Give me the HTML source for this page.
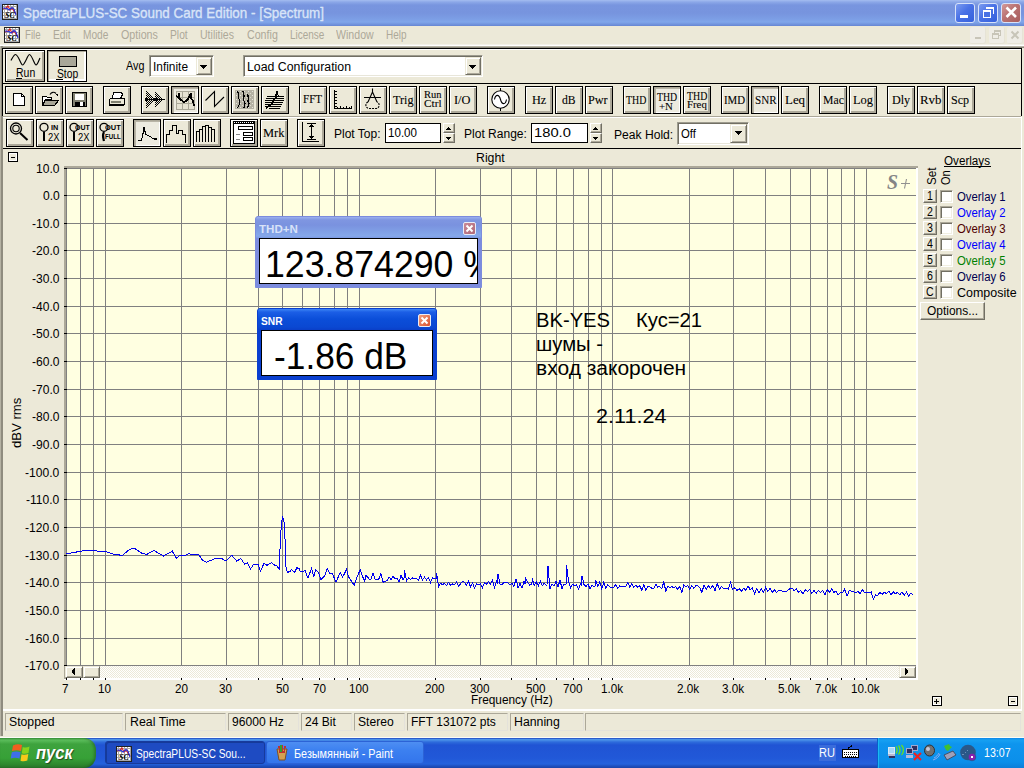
<!DOCTYPE html><html><head><meta charset="utf-8"><style>
*{margin:0;padding:0;box-sizing:border-box}
html,body{width:1024px;height:768px;overflow:hidden;background:#ECE9D8;font-family:"Liberation Sans",sans-serif;font-size:11px;color:#000;position:relative}
.ab{position:absolute}
.t{position:absolute;white-space:nowrap;line-height:1}
svg{shape-rendering:crispEdges}
svg .aa{shape-rendering:geometricPrecision}
</style></head><body>

<div class="ab" style="left:0px;top:0px;width:1024px;height:26px;background:linear-gradient(to bottom,#A4BDF0 0px,#8CA8E8 2px,#7895DF 5px,#7794DE 13px,#7C9EE5 19px,#80A6EA 22px,#6D8ED9 25px,#6585D2 26px)"></div>
<div class="ab" style="left:2px;top:4px;width:16px;height:16px;background-color:#fff;border:1px solid #222;background-image:linear-gradient(#A8A8A8 1px,transparent 1px),linear-gradient(90deg,#A8A8A8 1px,transparent 1px);background-size:3px 3px;background-position:1px 1px"></div>
<svg class="ab" style="left:3px;top:5px;" width="14" height="14" viewBox="0 0 14 14"><path class="aa" d="M0 4 L3 3 L5 1 L7 5 L9 3 L11 6 L13 9" fill="none" stroke="#E02020" stroke-width="1.1"/><path class="aa" d="M0 3 L4 3.5 L6 5 L9 2.5 L11 4 L13 10" fill="none" stroke="#2030E0" stroke-width="1.1"/><text x="7.0" y="13" text-anchor="middle" font-family="Liberation Serif" font-style="italic" font-weight="bold" font-size="8.0" fill="#000">SC</text></svg>
<div class="t" style="left:22.70px;top:6.02px;font-size:14.5px;color:#D8E4F8;font-family:'Liberation Sans',sans-serif;transform:scaleX(0.9245);transform-origin:0 0;-webkit-text-stroke:0.35px #D8E4F8;">SpectraPLUS-SC Sound Card Edition - [Spectrum]</div>
<div class="ab" style="left:955px;top:3px;width:20px;height:20px;border-radius:3px;border:1px solid #D7E2FA;background:linear-gradient(135deg,#7C9CF0 0%,#4A72E6 45%,#3560DC 100%)"></div>
<div class="ab" style="left:978px;top:3px;width:20px;height:20px;border-radius:3px;border:1px solid #D7E2FA;background:linear-gradient(135deg,#7C9CF0 0%,#4A72E6 45%,#3560DC 100%)"></div>
<div class="ab" style="left:1001px;top:3px;width:20px;height:20px;border-radius:3px;border:1px solid #D7E2FA;background:linear-gradient(135deg,#D49A9A 0%,#B97272 45%,#A85E5E 100%)"></div>
<div class="ab" style="left:960px;top:15px;width:8px;height:3px;background:#fff"></div>
<div class="ab" style="left:986px;top:7px;width:8px;height:7px;border-top:2px solid #fff;border-right:1px solid #fff"></div>
<div class="ab" style="left:983px;top:10px;width:8px;height:8px;border:1px solid #fff;border-top-width:2px;background:#4A72E4"></div>
<svg class="ab" style="left:1001px;top:3px;" width="20" height="20" viewBox="0 0 20 20"><path class="aa" d="M5.5 4.5L15 14M15 4.5L5.5 14" stroke="#fff" stroke-width="2.6"/></svg>
<div class="ab" style="left:4px;top:27px;width:16px;height:16px;background-color:#fff;border:1px solid #222;background-image:linear-gradient(#A8A8A8 1px,transparent 1px),linear-gradient(90deg,#A8A8A8 1px,transparent 1px);background-size:3px 3px;background-position:1px 1px"></div>
<svg class="ab" style="left:5px;top:28px;" width="14" height="14" viewBox="0 0 14 14"><path class="aa" d="M0 4 L3 3 L5 1 L7 5 L9 3 L11 6 L13 9" fill="none" stroke="#E02020" stroke-width="1.1"/><path class="aa" d="M0 3 L4 3.5 L6 5 L9 2.5 L11 4 L13 10" fill="none" stroke="#2030E0" stroke-width="1.1"/><text x="7.0" y="13" text-anchor="middle" font-family="Liberation Serif" font-style="italic" font-weight="bold" font-size="8.0" fill="#000">SC</text></svg>
<div class="t" style="left:25.40px;top:29.14px;font-size:12px;color:#ACA899;font-family:'Liberation Sans',sans-serif;transform:scaleX(0.8062);transform-origin:0 0;">File</div>
<div class="t" style="left:53.30px;top:29.14px;font-size:12px;color:#ACA899;font-family:'Liberation Sans',sans-serif;transform:scaleX(0.8563);transform-origin:0 0;">Edit</div>
<div class="t" style="left:83.30px;top:29.14px;font-size:12px;color:#ACA899;font-family:'Liberation Sans',sans-serif;transform:scaleX(0.8458);transform-origin:0 0;">Mode</div>
<div class="t" style="left:121.40px;top:29.14px;font-size:12px;color:#ACA899;font-family:'Liberation Sans',sans-serif;transform:scaleX(0.8920);transform-origin:0 0;">Options</div>
<div class="t" style="left:170.20px;top:29.14px;font-size:12px;color:#ACA899;font-family:'Liberation Sans',sans-serif;transform:scaleX(0.8563);transform-origin:0 0;">Plot</div>
<div class="t" style="left:200.20px;top:29.14px;font-size:12px;color:#ACA899;font-family:'Liberation Sans',sans-serif;transform:scaleX(0.8792);transform-origin:0 0;">Utilities</div>
<div class="t" style="left:246.50px;top:29.14px;font-size:12px;color:#ACA899;font-family:'Liberation Sans',sans-serif;transform:scaleX(0.8881);transform-origin:0 0;">Config</div>
<div class="t" style="left:289.60px;top:29.14px;font-size:12px;color:#ACA899;font-family:'Liberation Sans',sans-serif;transform:scaleX(0.8315);transform-origin:0 0;">License</div>
<div class="t" style="left:336.30px;top:29.14px;font-size:12px;color:#ACA899;font-family:'Liberation Sans',sans-serif;transform:scaleX(0.8825);transform-origin:0 0;">Window</div>
<div class="t" style="left:386.40px;top:29.14px;font-size:12px;color:#ACA899;font-family:'Liberation Sans',sans-serif;transform:scaleX(0.8303);transform-origin:0 0;">Help</div>
<div class="ab" style="left:970px;top:27px;width:16px;height:17px;background:#EFEDE6;border-radius:2px;box-shadow:inset -1px -1px 0 #E6E3D6"></div>
<div class="ab" style="left:989px;top:27px;width:16px;height:17px;background:#EFEDE6;border-radius:2px;box-shadow:inset -1px -1px 0 #E6E3D6"></div>
<div class="ab" style="left:1007px;top:27px;width:16px;height:17px;background:#EFEDE6;border-radius:2px;box-shadow:inset -1px -1px 0 #E6E3D6"></div>
<div class="ab" style="left:975px;top:37px;width:6px;height:2px;background:#C8C5B8"></div>
<div class="ab" style="left:994px;top:30px;width:7px;height:6px;border:1px solid #C8C5B8;border-top-width:2px"></div>
<div class="ab" style="left:992px;top:33px;width:7px;height:6px;border:1px solid #C8C5B8;border-top-width:2px;background:#EFEDE6"></div>
<svg class="ab" style="left:1010px;top:30px;" width="10" height="10" viewBox="0 0 10 10"><path class="aa" d="M1.5 1.5L8.5 8.5M8.5 1.5L1.5 8.5" stroke="#C8C5B8" stroke-width="2"/></svg>
<div class="ab" style="left:0px;top:44px;width:1024px;height:1px;background:#F3F1E8"></div>
<div class="ab" style="left:0px;top:45px;width:1024px;height:1px;background:#fff"></div>
<div class="ab" style="left:0px;top:46px;width:1024px;height:1px;background:#B9B6A8"></div>
<div class="ab" style="left:0px;top:47px;width:1024px;height:1px;background:#8E8B7E"></div>
<div class="ab" style="left:0px;top:46px;width:3px;height:690px;background:linear-gradient(90deg,#B5B2A3 0px,#B5B2A3 1px,#8F8C7F 1px,#8F8C7F 3px)"></div>
<div class="ab" style="left:2px;top:48px;width:1020px;height:36px;border:1px solid #000"></div>
<div class="ab" style="left:3px;top:49px;width:1018px;height:1px;background:#fff"></div>
<div class="ab" style="left:2px;top:84px;width:1px;height:32px;background:#000"></div>
<div class="ab" style="left:1021px;top:84px;width:1px;height:32px;background:#000"></div>
<div class="ab" style="left:3px;top:116px;width:1018px;height:1px;background:#ACA899"></div>
<div class="ab" style="left:3px;top:117px;width:1018px;height:1px;background:#fff"></div>
<div class="ab" style="left:3px;top:148px;width:1018px;height:1px;background:#000"></div>
<div class="ab" style="left:5px;top:50px;width:40px;height:32px;border:1px solid #000;background:#ECE9D8;box-shadow:inset 1px 1px 0 #fff,inset -1px -1px 0 #ACA899,inset -2px -2px 0 #ACA899"></div>
<svg class="ab" style="left:5px;top:50px;" width="40" height="32" viewBox="0 0 40 32"><path class="aa" d="M6 10.5 C8 7,9 4.5,10.5 4.5 C12.5 4.5,14.5 10,16 13 C17 15,17 15,17.5 15 C19 15,21 10,22.5 7 C23.5 5,24 4.5,24.5 4.5 C26 4.5,28.5 11,29.5 13 C30.5 15,30.5 15,31 15 C32.5 15,34 10,35 8" fill="none" stroke="#000" stroke-width="1.15"/></svg>
<div class="t" style="left:16.00px;top:66.72px;font-size:12.5px;color:#000;font-family:'Liberation Sans',sans-serif;transform:scaleX(0.8371);transform-origin:0 0;">Run</div>
<div class="ab" style="left:16px;top:78px;width:6px;height:1px;background:#000"></div>
<div class="ab" style="left:47px;top:50px;width:40px;height:32px;border:1px solid #000;background:#ECE9D8;box-shadow:inset 1px 1px 0 #ACA899,inset -1px -1px 0 #fff,inset -2px -2px 0 #fff"></div>
<div class="ab" style="left:59px;top:56px;width:18px;height:11px;border:1px solid #000;background:#A9A798"></div>
<div class="t" style="left:57.00px;top:67.72px;font-size:12.5px;color:#000;font-family:'Liberation Sans',sans-serif;transform:scaleX(0.8243);transform-origin:0 0;">Stop</div>
<div class="ab" style="left:56px;top:79px;width:7px;height:1px;background:#000"></div>
<div class="t" style="left:126.00px;top:60.14px;font-size:12px;color:#000;font-family:'Liberation Sans',sans-serif;transform:scaleX(0.8993);transform-origin:0 0;">Avg</div>
<div class="ab" style="left:149px;top:55px;width:65px;height:22px;background:#fff;border:1px solid;border-color:#9D9B8E #fff #fff #9D9B8E;box-shadow:inset 1px 1px 0 #716F64,inset -1px -1px 0 #E8E6DA"></div>
<div class="t" style="left:153.20px;top:61.14px;font-size:12px;color:#000;font-family:'Liberation Sans',sans-serif;transform:scaleX(0.9895);transform-origin:0 0;">Infinite</div>
<div class="ab" style="left:196px;top:57px;width:16px;height:18px;background:#ECE9D8;border:1px solid;border-color:#ECE9D8 #716F64 #716F64 #ECE9D8;box-shadow:inset 1px 1px 0 #fff,inset -1px -1px 0 #ACA899"></div>
<svg class="ab" style="left:200px;top:65px;" width="8" height="5" viewBox="0 0 8 5"><path d="M0 0H7V1H6V2H5V3H4V4H3V3H2V2H1V1H0Z" fill="#000"/></svg>
<div class="ab" style="left:243px;top:55px;width:240px;height:22px;background:#fff;border:1px solid;border-color:#9D9B8E #fff #fff #9D9B8E;box-shadow:inset 1px 1px 0 #716F64,inset -1px -1px 0 #E8E6DA"></div>
<div class="t" style="left:246.60px;top:61.14px;font-size:12px;color:#000;font-family:'Liberation Sans',sans-serif;transform:scaleX(1.0256);transform-origin:0 0;">Load Configuration</div>
<div class="ab" style="left:465px;top:57px;width:16px;height:18px;background:#ECE9D8;border:1px solid;border-color:#ECE9D8 #716F64 #716F64 #ECE9D8;box-shadow:inset 1px 1px 0 #fff,inset -1px -1px 0 #ACA899"></div>
<svg class="ab" style="left:469px;top:65px;" width="8" height="5" viewBox="0 0 8 5"><path d="M0 0H7V1H6V2H5V3H4V4H3V3H2V2H1V1H0Z" fill="#000"/></svg>
<div class="ab" style="left:5px;top:86px;width:28px;height:28px;border:1px solid #000;background:#ECE9D8;box-shadow:inset 1px 1px 0 #fff,inset -1px -1px 0 #ACA899,inset -2px -2px 0 #ACA899"></div>
<div class="ab" style="left:35px;top:86px;width:28px;height:28px;border:1px solid #000;background:#ECE9D8;box-shadow:inset 1px 1px 0 #fff,inset -1px -1px 0 #ACA899,inset -2px -2px 0 #ACA899"></div>
<div class="ab" style="left:65px;top:86px;width:28px;height:28px;border:1px solid #000;background:#ECE9D8;box-shadow:inset 1px 1px 0 #fff,inset -1px -1px 0 #ACA899,inset -2px -2px 0 #ACA899"></div>
<div class="ab" style="left:103px;top:86px;width:28px;height:28px;border:1px solid #000;background:#ECE9D8;box-shadow:inset 1px 1px 0 #fff,inset -1px -1px 0 #ACA899,inset -2px -2px 0 #ACA899"></div>
<div class="ab" style="left:141px;top:86px;width:28px;height:28px;border:1px solid #000;background:#ECE9D8;box-shadow:inset 1px 1px 0 #fff,inset -1px -1px 0 #ACA899,inset -2px -2px 0 #ACA899"></div>
<div class="ab" style="left:171px;top:86px;width:28px;height:28px;border:1px solid #000;background-color:#EDEBE0;box-shadow:inset 1px 1px 0 #ACA899,inset 2px 2px 0 #B8B4A6,inset -1px -1px 0 #fff"></div>
<div class="ab" style="left:201px;top:86px;width:28px;height:28px;border:1px solid #000;background:#ECE9D8;box-shadow:inset 1px 1px 0 #fff,inset -1px -1px 0 #ACA899,inset -2px -2px 0 #ACA899"></div>
<div class="ab" style="left:231px;top:86px;width:28px;height:28px;border:1px solid #000;background:#ECE9D8;box-shadow:inset 1px 1px 0 #fff,inset -1px -1px 0 #ACA899,inset -2px -2px 0 #ACA899"></div>
<div class="ab" style="left:261px;top:86px;width:28px;height:28px;border:1px solid #000;background:#ECE9D8;box-shadow:inset 1px 1px 0 #fff,inset -1px -1px 0 #ACA899,inset -2px -2px 0 #ACA899"></div>
<div class="ab" style="left:299px;top:86px;width:28px;height:28px;border:1px solid #000;background:#ECE9D8;box-shadow:inset 1px 1px 0 #fff,inset -1px -1px 0 #ACA899,inset -2px -2px 0 #ACA899"></div>
<div class="ab" style="left:329px;top:86px;width:28px;height:28px;border:1px solid #000;background:#ECE9D8;box-shadow:inset 1px 1px 0 #fff,inset -1px -1px 0 #ACA899,inset -2px -2px 0 #ACA899"></div>
<div class="ab" style="left:359px;top:86px;width:28px;height:28px;border:1px solid #000;background:#ECE9D8;box-shadow:inset 1px 1px 0 #fff,inset -1px -1px 0 #ACA899,inset -2px -2px 0 #ACA899"></div>
<div class="ab" style="left:389px;top:86px;width:28px;height:28px;border:1px solid #000;background:#ECE9D8;box-shadow:inset 1px 1px 0 #fff,inset -1px -1px 0 #ACA899,inset -2px -2px 0 #ACA899"></div>
<div class="ab" style="left:419px;top:86px;width:28px;height:28px;border:1px solid #000;background:#ECE9D8;box-shadow:inset 1px 1px 0 #fff,inset -1px -1px 0 #ACA899,inset -2px -2px 0 #ACA899"></div>
<div class="ab" style="left:449px;top:86px;width:28px;height:28px;border:1px solid #000;background:#ECE9D8;box-shadow:inset 1px 1px 0 #fff,inset -1px -1px 0 #ACA899,inset -2px -2px 0 #ACA899"></div>
<div class="ab" style="left:487px;top:86px;width:28px;height:28px;border:1px solid #000;background:#ECE9D8;box-shadow:inset 1px 1px 0 #fff,inset -1px -1px 0 #ACA899,inset -2px -2px 0 #ACA899"></div>
<div class="ab" style="left:525px;top:86px;width:28px;height:28px;border:1px solid #000;background:#ECE9D8;box-shadow:inset 1px 1px 0 #fff,inset -1px -1px 0 #ACA899,inset -2px -2px 0 #ACA899"></div>
<div class="ab" style="left:555px;top:86px;width:28px;height:28px;border:1px solid #000;background:#ECE9D8;box-shadow:inset 1px 1px 0 #fff,inset -1px -1px 0 #ACA899,inset -2px -2px 0 #ACA899"></div>
<div class="ab" style="left:585px;top:86px;width:28px;height:28px;border:1px solid #000;background:#ECE9D8;box-shadow:inset 1px 1px 0 #fff,inset -1px -1px 0 #ACA899,inset -2px -2px 0 #ACA899"></div>
<div class="ab" style="left:623px;top:86px;width:28px;height:28px;border:1px solid #000;background:#ECE9D8;box-shadow:inset 1px 1px 0 #fff,inset -1px -1px 0 #ACA899,inset -2px -2px 0 #ACA899"></div>
<div class="ab" style="left:653px;top:86px;width:28px;height:28px;border:1px solid #000;background-color:#EDEBE0;box-shadow:inset 1px 1px 0 #ACA899,inset 2px 2px 0 #B8B4A6,inset -1px -1px 0 #fff"></div>
<div class="ab" style="left:683px;top:86px;width:28px;height:28px;border:1px solid #000;background:#ECE9D8;box-shadow:inset 1px 1px 0 #fff,inset -1px -1px 0 #ACA899,inset -2px -2px 0 #ACA899"></div>
<div class="ab" style="left:721px;top:86px;width:28px;height:28px;border:1px solid #000;background:#ECE9D8;box-shadow:inset 1px 1px 0 #fff,inset -1px -1px 0 #ACA899,inset -2px -2px 0 #ACA899"></div>
<div class="ab" style="left:751px;top:86px;width:28px;height:28px;border:1px solid #000;background-color:#EDEBE0;box-shadow:inset 1px 1px 0 #ACA899,inset 2px 2px 0 #B8B4A6,inset -1px -1px 0 #fff"></div>
<div class="ab" style="left:781px;top:86px;width:28px;height:28px;border:1px solid #000;background:#ECE9D8;box-shadow:inset 1px 1px 0 #fff,inset -1px -1px 0 #ACA899,inset -2px -2px 0 #ACA899"></div>
<div class="ab" style="left:819px;top:86px;width:28px;height:28px;border:1px solid #000;background:#ECE9D8;box-shadow:inset 1px 1px 0 #fff,inset -1px -1px 0 #ACA899,inset -2px -2px 0 #ACA899"></div>
<div class="ab" style="left:849px;top:86px;width:28px;height:28px;border:1px solid #000;background:#ECE9D8;box-shadow:inset 1px 1px 0 #fff,inset -1px -1px 0 #ACA899,inset -2px -2px 0 #ACA899"></div>
<div class="ab" style="left:887px;top:86px;width:28px;height:28px;border:1px solid #000;background:#ECE9D8;box-shadow:inset 1px 1px 0 #fff,inset -1px -1px 0 #ACA899,inset -2px -2px 0 #ACA899"></div>
<div class="ab" style="left:917px;top:86px;width:28px;height:28px;border:1px solid #000;background:#ECE9D8;box-shadow:inset 1px 1px 0 #fff,inset -1px -1px 0 #ACA899,inset -2px -2px 0 #ACA899"></div>
<div class="ab" style="left:947px;top:86px;width:28px;height:28px;border:1px solid #000;background:#ECE9D8;box-shadow:inset 1px 1px 0 #fff,inset -1px -1px 0 #ACA899,inset -2px -2px 0 #ACA899"></div>
<svg class="ab" style="left:5px;top:86px;" width="28" height="28" viewBox="0 0 28 28"><path d="M8.5 7.5H16.5L19.5 10.5V19.5H8.5Z" fill="#fff" stroke="#000" stroke-width="1"/><path d="M16.5 7.5V10.5H19.5" fill="none" stroke="#000"/></svg>
<svg class="ab" style="left:35px;top:86px;" width="28" height="28" viewBox="0 0 28 28"><path d="M7.5 10.5H11.5L12.5 11.5H16.5V13.5H10.5L7.5 18.5Z" fill="#fff" stroke="#000"/><path d="M7.5 19.5L10.5 14.5H23.5L19.5 19.5Z" fill="#A9A798" stroke="#000"/><path class="aa" d="M15 8.5C16.5 6,19 5.5,21 7.5" fill="none" stroke="#000" stroke-width="1.2"/><path d="M20 8H23V11Z" fill="#000"/></svg>
<svg class="ab" style="left:65px;top:86px;" width="28" height="28" viewBox="0 0 28 28"><rect x="7.5" y="6.5" width="14" height="14" fill="#808070" stroke="#000"/><rect x="9.5" y="7.5" width="9" height="6" fill="#fff"/><rect x="9.5" y="15.5" width="10" height="5" fill="#000"/><rect x="15" y="16" width="2.5" height="4" fill="#fff"/></svg>
<svg class="ab" style="left:103px;top:86px;" width="28" height="28" viewBox="0 0 28 28"><path d="M10.5 6.5H18.5L19.5 8.5L17.5 12.5H9.5Z" fill="#fff" stroke="#000"/><rect x="6.5" y="12.5" width="15" height="7" rx="1.5" fill="#ECE9D8" stroke="#000"/><rect x="8" y="15" width="10" height="2" fill="#808070"/><path d="M7 18.5H21" stroke="#000"/></svg>
<svg class="ab" style="left:141px;top:86px;" width="28" height="28" viewBox="0 0 28 28"><defs><pattern id="dit" width="2" height="2" patternUnits="userSpaceOnUse"><rect width="1" height="1" fill="#000"/><rect x="1" y="1" width="1" height="1" fill="#000"/></pattern></defs><path d="M5 4L14 13.5L5 23Z" fill="url(#dit)"/><path d="M14 5L22 13.5L14 22Z" fill="url(#dit)"/><path d="M4 13.5H24" stroke="#000" stroke-width="1"/><rect x="4" y="12" width="3" height="3" fill="#000"/><rect x="13" y="12" width="3" height="3" fill="#000"/></svg>
<svg class="ab" style="left:171px;top:86px;" width="28" height="28" viewBox="0 0 28 28"><rect x="5.5" y="5.5" width="18" height="18" fill="#E6E3D3" stroke="#A9A798"/><path d="M11.5 5.5V23.5M17.5 5.5V23.5M5.5 11.5H23.5M5.5 17.5H23.5" stroke="#A9A798"/><path d="M5 10L7 11L8 7L8 12L10 14L13 16L15 15L17 13L19 9L20 7L20 12L22 15L23 20" fill="none" stroke="#000" stroke-width="1.6" style="shape-rendering:crispEdges"/></svg>
<svg class="ab" style="left:201px;top:86px;" width="28" height="28" viewBox="0 0 28 28"><path class="aa" d="M4.5 14.5L13.5 5.5V20.5L23 11" fill="none" stroke="#000" stroke-width="1.1"/></svg>
<svg class="ab" style="left:231px;top:86px;" width="28" height="28" viewBox="0 0 28 28"><defs><pattern id="wdit" width="4" height="4" patternUnits="userSpaceOnUse"><rect width="4" height="4" fill="#B5B2A4"/><rect x="1" y="1" width="1" height="1" fill="#E8E6DC"/><rect x="3" y="3" width="1" height="1" fill="#DCD9CE"/></pattern></defs><rect x="4" y="4" width="19" height="19" fill="url(#wdit)"/><path d="M6.5 5L7.5 8V12L8.5 14V18L6.5 22M12 5L13 10L12.5 14L14 17L13 22M16.5 8L17.5 12L17 15L18 18L16.5 22" fill="none" stroke="#000" stroke-width="1.3" style="shape-rendering:crispEdges"/></svg>
<svg class="ab" style="left:261px;top:86px;" width="28" height="28" viewBox="0 0 28 28"><path d="M6 10.5H23M5 12.5H23M4 14.5H23M4 16.5H22M4 18.5H21M4 20.5H20M8 22.5H19" stroke="#000" stroke-width="1.1"/><path d="M16.5 5L15 8.5L15.5 11L13 13L12 15L11.5 17L9 19L7.5 20L5 22.5" fill="none" stroke="#000" stroke-width="1.6" style="shape-rendering:crispEdges"/><path d="M16 5L17 9L18 10" fill="none" stroke="#000" stroke-width="1"/></svg>
<div class="t" style="left:302.75px;top:93.67px;font-size:11.5px;color:#000;font-family:'Liberation Serif',serif;transform:scaleX(0.9592);transform-origin:0 0;-webkit-text-stroke:0.1px #000;">FFT</div>
<svg class="ab" style="left:329px;top:86px;" width="28" height="28" viewBox="0 0 28 28"><path d="M5.5 4V22.5H23" fill="none" stroke="#000"/><path d="M6 5.5H8M6 8.5H8M6 11.5H8M6 14.5H8M6 17.5H8M6 20.5H8M8.5 21V22M11.5 20V22M14.5 21V22M17.5 20V22M20.5 21V22M22.5 20V22" stroke="#000"/></svg>
<svg class="ab" style="left:359px;top:86px;" width="28" height="28" viewBox="0 0 28 28"><path class="aa" d="M13.5 2.5V6M13.5 6L9 16M13.5 6L18 16M5 11.5H22" fill="none" stroke="#000" stroke-width="1.1"/><path class="aa" d="M9 16C6 17,6 22,10 22.5H17C21 22,21 17,18 16" fill="none" stroke="#000" stroke-width="1.1" stroke-dasharray="2 1"/></svg>
<div class="t" style="left:392.50px;top:93.25px;font-size:13.2px;color:#000;font-family:'Liberation Serif',serif;transform:scaleX(0.9203);transform-origin:0 0;-webkit-text-stroke:0.1px #000;">Trig</div>
<div class="t" style="left:424.00px;top:89.51px;font-size:10.5px;color:#000;font-family:'Liberation Serif',serif;transform:scaleX(0.9995);transform-origin:0 0;-webkit-text-stroke:0.1px #000;">Run</div>
<div class="t" style="left:424.00px;top:98.51px;font-size:10.5px;color:#000;font-family:'Liberation Serif',serif;transform:scaleX(1.0718);transform-origin:0 0;-webkit-text-stroke:0.1px #000;">Ctrl</div>
<div class="t" style="left:454.30px;top:93.25px;font-size:13.2px;color:#000;font-family:'Liberation Serif',serif;transform:scaleX(0.9381);transform-origin:0 0;-webkit-text-stroke:0.1px #000;">I/O</div>
<svg class="ab" style="left:487px;top:86px;" width="28" height="28" viewBox="0 0 28 28"><circle class="aa" cx="13.5" cy="13.5" r="8.7" fill="#fff" stroke="#000" stroke-width="1.1"/><path d="M13.5 2V5M13.5 22V25" stroke="#000"/><path class="aa" d="M7.5 13.5C8.5 8,12 8,13.5 13.5C15 19,18.5 19,19.5 13.5" fill="none" stroke="#000" stroke-width="1.1"/></svg>
<div class="t" style="left:532.00px;top:93.25px;font-size:13.2px;color:#000;font-family:'Liberation Serif',serif;transform:scaleX(0.9299);transform-origin:0 0;-webkit-text-stroke:0.1px #000;">Hz</div>
<div class="t" style="left:561.90px;top:93.25px;font-size:13.2px;color:#000;font-family:'Liberation Serif',serif;transform:scaleX(0.8825);transform-origin:0 0;-webkit-text-stroke:0.1px #000;">dB</div>
<div class="t" style="left:588.20px;top:93.25px;font-size:13.2px;color:#000;font-family:'Liberation Serif',serif;transform:scaleX(0.9255);transform-origin:0 0;-webkit-text-stroke:0.1px #000;">Pwr</div>
<div class="t" style="left:625.90px;top:93.25px;font-size:13.2px;color:#000;font-family:'Liberation Serif',serif;transform:scaleX(0.7502);transform-origin:0 0;-webkit-text-stroke:0.1px #000;">THD</div>
<div class="t" style="left:723.90px;top:93.25px;font-size:13.2px;color:#000;font-family:'Liberation Serif',serif;transform:scaleX(0.8218);transform-origin:0 0;-webkit-text-stroke:0.1px #000;">IMD</div>
<div class="t" style="left:754.70px;top:93.25px;font-size:13.2px;color:#000;font-family:'Liberation Serif',serif;transform:scaleX(0.8394);transform-origin:0 0;-webkit-text-stroke:0.1px #000;">SNR</div>
<div class="t" style="left:784.90px;top:93.25px;font-size:13.2px;color:#000;font-family:'Liberation Serif',serif;transform:scaleX(0.9792);transform-origin:0 0;-webkit-text-stroke:0.1px #000;">Leq</div>
<div class="t" style="left:822.60px;top:93.25px;font-size:13.2px;color:#000;font-family:'Liberation Serif',serif;transform:scaleX(0.8908);transform-origin:0 0;-webkit-text-stroke:0.1px #000;">Mac</div>
<div class="t" style="left:852.70px;top:93.25px;font-size:13.2px;color:#000;font-family:'Liberation Serif',serif;transform:scaleX(0.9458);transform-origin:0 0;-webkit-text-stroke:0.1px #000;">Log</div>
<div class="t" style="left:891.70px;top:93.25px;font-size:13.2px;color:#000;font-family:'Liberation Serif',serif;transform:scaleX(0.9192);transform-origin:0 0;-webkit-text-stroke:0.1px #000;">Dly</div>
<div class="t" style="left:920.20px;top:93.25px;font-size:13.2px;color:#000;font-family:'Liberation Serif',serif;transform:scaleX(0.9768);transform-origin:0 0;-webkit-text-stroke:0.1px #000;">Rvb</div>
<div class="t" style="left:950.90px;top:93.25px;font-size:13.2px;color:#000;font-family:'Liberation Serif',serif;transform:scaleX(0.9141);transform-origin:0 0;-webkit-text-stroke:0.1px #000;">Scp</div>
<div class="t" style="left:656.90px;top:90.41px;font-size:13px;color:#000;font-family:'Liberation Serif',serif;transform:scaleX(0.7561);transform-origin:0 0;-webkit-text-stroke:0.1px #000;">THD</div>
<div class="t" style="left:659.00px;top:101.51px;font-size:10.5px;color:#000;font-family:'Liberation Serif',serif;transform:scaleX(1.0302);transform-origin:0 0;-webkit-text-stroke:0.1px #000;">+N</div>
<div class="t" style="left:686.90px;top:89.41px;font-size:13px;color:#000;font-family:'Liberation Serif',serif;transform:scaleX(0.7599);transform-origin:0 0;-webkit-text-stroke:0.1px #000;">THD</div>
<div class="t" style="left:686.90px;top:99.93px;font-size:10px;color:#000;font-family:'Liberation Serif',serif;transform:scaleX(1.0805);transform-origin:0 0;-webkit-text-stroke:0.1px #000;">Freq</div>
<div class="ab" style="left:6px;top:119px;width:28px;height:28px;border:1px solid #000;background:#ECE9D8;box-shadow:inset 1px 1px 0 #fff,inset -1px -1px 0 #ACA899,inset -2px -2px 0 #ACA899"></div>
<div class="ab" style="left:36px;top:119px;width:28px;height:28px;border:1px solid #000;background:#ECE9D8;box-shadow:inset 1px 1px 0 #fff,inset -1px -1px 0 #ACA899,inset -2px -2px 0 #ACA899"></div>
<div class="ab" style="left:66px;top:119px;width:28px;height:28px;border:1px solid #000;background:#ECE9D8;box-shadow:inset 1px 1px 0 #fff,inset -1px -1px 0 #ACA899,inset -2px -2px 0 #ACA899"></div>
<div class="ab" style="left:96px;top:119px;width:28px;height:28px;border:1px solid #000;background:#ECE9D8;box-shadow:inset 1px 1px 0 #fff,inset -1px -1px 0 #ACA899,inset -2px -2px 0 #ACA899"></div>
<div class="ab" style="left:133px;top:119px;width:28px;height:28px;border:1px solid #000;background-color:#EDEBE0;box-shadow:inset 1px 1px 0 #ACA899,inset 2px 2px 0 #B8B4A6,inset -1px -1px 0 #fff"></div>
<div class="ab" style="left:163px;top:119px;width:28px;height:28px;border:1px solid #000;background:#ECE9D8;box-shadow:inset 1px 1px 0 #fff,inset -1px -1px 0 #ACA899,inset -2px -2px 0 #ACA899"></div>
<div class="ab" style="left:193px;top:119px;width:28px;height:28px;border:1px solid #000;background:#ECE9D8;box-shadow:inset 1px 1px 0 #fff,inset -1px -1px 0 #ACA899,inset -2px -2px 0 #ACA899"></div>
<div class="ab" style="left:230px;top:119px;width:28px;height:28px;border:1px solid #000;background:#ECE9D8;box-shadow:inset 1px 1px 0 #fff,inset -1px -1px 0 #ACA899,inset -2px -2px 0 #ACA899"></div>
<div class="ab" style="left:260px;top:119px;width:28px;height:28px;border:1px solid #000;background:#ECE9D8;box-shadow:inset 1px 1px 0 #fff,inset -1px -1px 0 #ACA899,inset -2px -2px 0 #ACA899"></div>
<div class="ab" style="left:297px;top:119px;width:28px;height:28px;border:1px solid #000;background:#ECE9D8;box-shadow:inset 1px 1px 0 #fff,inset -1px -1px 0 #ACA899,inset -2px -2px 0 #ACA899"></div>
<svg class="ab" style="left:6px;top:119px;" width="28" height="28" viewBox="0 0 28 28"><circle class="aa" cx="10" cy="9.5" r="5.5" fill="none" stroke="#000" stroke-width="1.3"/><circle class="aa" cx="10" cy="9.5" r="3.2" fill="none" stroke="#000" stroke-width="1.1"/><path class="aa" d="M14 14L21.5 21" stroke="#000" stroke-width="2"/></svg>
<svg class="ab" style="left:36px;top:119px;" width="28" height="28" viewBox="0 0 28 28"><circle class="aa" cx="8" cy="8.3" r="4" fill="none" stroke="#000" stroke-width="1.3"/><path d="M8 13V22" stroke="#000" stroke-width="2.4"/></svg>
<svg class="ab" style="left:66px;top:119px;" width="28" height="28" viewBox="0 0 28 28"><circle class="aa" cx="8" cy="8.3" r="4" fill="none" stroke="#000" stroke-width="1.3"/><path d="M8 13V22" stroke="#000" stroke-width="2.4"/></svg>
<svg class="ab" style="left:96px;top:119px;" width="28" height="28" viewBox="0 0 28 28"><circle class="aa" cx="8" cy="8.3" r="4" fill="none" stroke="#000" stroke-width="1.3"/><path class="aa" d="M8 13C6 16,7 18,8 22" fill="none" stroke="#000" stroke-width="2.2"/></svg>
<div class="t" style="left:50.60px;top:124.80px;font-size:6.5px;color:#000;font-family:'Liberation Sans',sans-serif;font-weight:bold;transform:scaleX(1.1231);transform-origin:0 0;">IN</div>
<div class="t" style="left:47.60px;top:131.99px;font-size:11px;color:#000;font-family:'Liberation Sans',sans-serif;transform:scaleX(0.8552);transform-origin:0 0;">2X</div>
<div class="t" style="left:75.40px;top:124.80px;font-size:6.5px;color:#000;font-family:'Liberation Sans',sans-serif;font-weight:bold;transform:scaleX(1.0791);transform-origin:0 0;">OUT</div>
<div class="t" style="left:77.60px;top:131.99px;font-size:11px;color:#000;font-family:'Liberation Sans',sans-serif;transform:scaleX(0.8552);transform-origin:0 0;">2X</div>
<div class="t" style="left:104.50px;top:124.80px;font-size:6.5px;color:#000;font-family:'Liberation Sans',sans-serif;font-weight:bold;transform:scaleX(1.1447);transform-origin:0 0;">OUT</div>
<div class="t" style="left:104.50px;top:133.37px;font-size:7px;color:#000;font-family:'Liberation Sans',sans-serif;font-weight:bold;transform:scaleX(0.8778);transform-origin:0 0;">FULL</div>
<svg class="ab" style="left:133px;top:119px;" width="28" height="28" viewBox="0 0 28 28"><path d="M4.5 21.5H8L9.5 18L11 8L12.5 15L14 16L16 17L18 18L19 19L21 20H23.5" fill="none" stroke="#000" stroke-width="1.2" style="shape-rendering:crispEdges"/></svg>
<svg class="ab" style="left:163px;top:119px;" width="28" height="28" viewBox="0 0 28 28"><path d="M3.5 23.5V15.5H6.5V11.5H9.5V6.5H13.5V14.5H15.5V11.5H19.5V15.5H22.5V23.5" fill="none" stroke="#000" stroke-width="1.2"/></svg>
<svg class="ab" style="left:193px;top:119px;" width="28" height="28" viewBox="0 0 28 28"><path d="M3.5 23V12.5H6.5V23M6.5 23V10H9.5V23M9.5 23V7.5H12.5V23M12.5 23V6.5H15.5V23M15.5 23V8H18.5V23M18.5 23V10.5H21.5V23" fill="none" stroke="#000" stroke-width="1"/></svg>
<svg class="ab" style="left:230px;top:119px;" width="28" height="28" viewBox="0 0 28 28"><rect x="3.5" y="2.5" width="21" height="22" fill="#fff" stroke="#000"/><rect x="4" y="3" width="20" height="2" fill="#000"/><path d="M4 3.5H24" stroke="#fff" stroke-dasharray="1 1"/><rect x="8.5" y="7.5" width="14" height="3" fill="none" stroke="#000"/><rect x="13.5" y="13.5" width="9" height="3" fill="none" stroke="#000"/><rect x="13.5" y="18.5" width="9" height="3" fill="none" stroke="#000"/><path d="M6 15H10M6 20H10" stroke="#888"/></svg>
<div class="t" style="left:262.80px;top:126.83px;font-size:12.5px;color:#000;font-family:'Liberation Serif',serif;transform:scaleX(0.9985);transform-origin:0 0;-webkit-text-stroke:0.1px #000;">Mrk</div>
<svg class="ab" style="left:297px;top:119px;" width="28" height="28" viewBox="0 0 28 28"><path d="M5.5 3V22.5H22" fill="none" stroke="#000"/><path d="M14.5 5V20M10 4.5H19M10 20.5H19" stroke="#000"/><path d="M12 8L14.5 5L17 8Z M12 17L14.5 20L17 17Z" fill="#000"/></svg>
<div class="t" style="left:334.10px;top:127.72px;font-size:12.5px;color:#000;font-family:'Liberation Sans',sans-serif;transform:scaleX(0.9606);transform-origin:0 0;">Plot Top:</div>
<div class="ab" style="left:385px;top:123px;width:56px;height:20px;background:#fff;border:1px solid #000"></div>
<div class="t" style="left:388.30px;top:126.72px;font-size:12.5px;color:#000;font-family:'Liberation Sans',sans-serif;transform:scaleX(0.9271);transform-origin:0 0;">10.00</div>
<div class="ab" style="left:443px;top:123px;width:12px;height:10px;background:#ECE9D8;border:1px solid;border-color:#fff #716F64 #716F64 #fff;box-shadow:inset -1px -1px 0 #ACA899"></div>
<div class="ab" style="left:443px;top:133px;width:12px;height:10px;background:#ECE9D8;border:1px solid;border-color:#fff #716F64 #716F64 #fff;box-shadow:inset -1px -1px 0 #ACA899"></div>
<svg class="ab" style="left:446px;top:127px;" width="5" height="3" viewBox="0 0 5 3"><path d="M2 0H3V1H4V2H5V3H0V2H1V1H2Z" fill="#000"/></svg>
<svg class="ab" style="left:446px;top:137px;" width="5" height="3" viewBox="0 0 5 3"><path d="M0 0H5V1H4V2H3V3H2V2H1V1H0Z" fill="#000"/></svg>
<div class="t" style="left:464.20px;top:127.72px;font-size:12.5px;color:#000;font-family:'Liberation Sans',sans-serif;transform:scaleX(0.9631);transform-origin:0 0;">Plot Range:</div>
<div class="ab" style="left:531px;top:123px;width:57px;height:20px;background:#fff;border:1px solid #000"></div>
<div class="t" style="left:533.70px;top:126.72px;font-size:12.5px;color:#000;font-family:'Liberation Sans',sans-serif;transform:scaleX(1.1796);transform-origin:0 0;">180.0</div>
<div class="ab" style="left:590px;top:123px;width:12px;height:10px;background:#ECE9D8;border:1px solid;border-color:#fff #716F64 #716F64 #fff;box-shadow:inset -1px -1px 0 #ACA899"></div>
<div class="ab" style="left:590px;top:133px;width:12px;height:10px;background:#ECE9D8;border:1px solid;border-color:#fff #716F64 #716F64 #fff;box-shadow:inset -1px -1px 0 #ACA899"></div>
<svg class="ab" style="left:593px;top:127px;" width="5" height="3" viewBox="0 0 5 3"><path d="M2 0H3V1H4V2H5V3H0V2H1V1H2Z" fill="#000"/></svg>
<svg class="ab" style="left:593px;top:137px;" width="5" height="3" viewBox="0 0 5 3"><path d="M0 0H5V1H4V2H3V3H2V2H1V1H0Z" fill="#000"/></svg>
<div class="t" style="left:614.40px;top:128.72px;font-size:12.5px;color:#000;font-family:'Liberation Sans',sans-serif;transform:scaleX(0.9680);transform-origin:0 0;">Peak Hold:</div>
<div class="ab" style="left:677px;top:122px;width:72px;height:23px;background:#fff;border:1px solid;border-color:#9D9B8E #fff #fff #9D9B8E;box-shadow:inset 1px 1px 0 #716F64,inset -1px -1px 0 #E8E6DA"></div>
<div class="t" style="left:681.40px;top:127.72px;font-size:12.5px;color:#000;font-family:'Liberation Sans',sans-serif;transform:scaleX(0.9047);transform-origin:0 0;">Off</div>
<div class="ab" style="left:730px;top:124px;width:17px;height:19px;background:#ECE9D8;border:1px solid;border-color:#ECE9D8 #716F64 #716F64 #ECE9D8;box-shadow:inset 1px 1px 0 #fff,inset -1px -1px 0 #ACA899"></div>
<svg class="ab" style="left:735px;top:131px;" width="8" height="5" viewBox="0 0 8 5"><path d="M0 0H7V1H6V2H5V3H4V4H3V3H2V2H1V1H0Z" fill="#000"/></svg>
<div class="ab" style="left:8px;top:152px;width:10px;height:10px;border:1px solid #000;background:#ECE9D8;box-shadow:inset 1px 1px 0 #fff,inset -1px -1px 0 #fff"></div>
<div class="ab" style="left:11px;top:157px;width:4px;height:1px;background:#000"></div>
<div class="t" style="left:476.40px;top:151.72px;font-size:12.5px;color:#000;font-family:'Liberation Sans',sans-serif;transform:scaleX(0.9833);transform-origin:0 0;">Right</div>
<svg class="ab" style="left:64px;top:166px" width="854" height="514"><rect x="0" y="0" width="854" height="514" fill="#fff"/><rect x="0" y="0" width="854" height="2" fill="#ACA899"/><rect x="0" y="0" width="2" height="513" fill="#ACA899"/><rect x="3" y="3" width="849" height="496" fill="#FFFFE1"/><rect x="2" y="2" width="850" height="1" fill="#808080"/><rect x="2" y="29" width="850" height="1" fill="#808080"/><rect x="2" y="57" width="850" height="1" fill="#808080"/><rect x="2" y="84" width="850" height="1" fill="#808080"/><rect x="2" y="112" width="850" height="1" fill="#808080"/><rect x="2" y="140" width="850" height="1" fill="#808080"/><rect x="2" y="167" width="850" height="1" fill="#808080"/><rect x="2" y="195" width="850" height="1" fill="#808080"/><rect x="2" y="223" width="850" height="1" fill="#808080"/><rect x="2" y="250" width="850" height="1" fill="#808080"/><rect x="2" y="278" width="850" height="1" fill="#808080"/><rect x="2" y="306" width="850" height="1" fill="#808080"/><rect x="2" y="333" width="850" height="1" fill="#808080"/><rect x="2" y="361" width="850" height="1" fill="#808080"/><rect x="2" y="389" width="850" height="1" fill="#808080"/><rect x="2" y="416" width="850" height="1" fill="#808080"/><rect x="2" y="444" width="850" height="1" fill="#808080"/><rect x="2" y="472" width="850" height="1" fill="#808080"/><rect x="2" y="499" width="850" height="1" fill="#808080"/><rect x="2" y="2" width="1" height="498" fill="#808080"/><rect x="16" y="2" width="1" height="498" fill="#808080"/><rect x="29" y="2" width="1" height="498" fill="#808080"/><rect x="41" y="2" width="1" height="498" fill="#808080"/><rect x="117" y="2" width="1" height="498" fill="#808080"/><rect x="162" y="2" width="1" height="498" fill="#808080"/><rect x="194" y="2" width="1" height="498" fill="#808080"/><rect x="218" y="2" width="1" height="498" fill="#808080"/><rect x="238" y="2" width="1" height="498" fill="#808080"/><rect x="255" y="2" width="1" height="498" fill="#808080"/><rect x="270" y="2" width="1" height="498" fill="#808080"/><rect x="283" y="2" width="1" height="498" fill="#808080"/><rect x="295" y="2" width="1" height="498" fill="#808080"/><rect x="371" y="2" width="1" height="498" fill="#808080"/><rect x="416" y="2" width="1" height="498" fill="#808080"/><rect x="447" y="2" width="1" height="498" fill="#808080"/><rect x="472" y="2" width="1" height="498" fill="#808080"/><rect x="492" y="2" width="1" height="498" fill="#808080"/><rect x="509" y="2" width="1" height="498" fill="#808080"/><rect x="524" y="2" width="1" height="498" fill="#808080"/><rect x="537" y="2" width="1" height="498" fill="#808080"/><rect x="548" y="2" width="1" height="498" fill="#808080"/><rect x="625" y="2" width="1" height="498" fill="#808080"/><rect x="669" y="2" width="1" height="498" fill="#808080"/><rect x="701" y="2" width="1" height="498" fill="#808080"/><rect x="726" y="2" width="1" height="498" fill="#808080"/><rect x="746" y="2" width="1" height="498" fill="#808080"/><rect x="763" y="2" width="1" height="498" fill="#808080"/><rect x="777" y="2" width="1" height="498" fill="#808080"/><rect x="790" y="2" width="1" height="498" fill="#808080"/><rect x="802" y="2" width="1" height="498" fill="#808080"/><rect x="2" y="2" width="1" height="512" fill="#808080"/><rect x="0" y="2" width="3" height="1" fill="#000"/><rect x="0" y="29" width="3" height="1" fill="#000"/><rect x="0" y="57" width="3" height="1" fill="#000"/><rect x="0" y="84" width="3" height="1" fill="#000"/><rect x="0" y="112" width="3" height="1" fill="#000"/><rect x="0" y="140" width="3" height="1" fill="#000"/><rect x="0" y="167" width="3" height="1" fill="#000"/><rect x="0" y="195" width="3" height="1" fill="#000"/><rect x="0" y="223" width="3" height="1" fill="#000"/><rect x="0" y="250" width="3" height="1" fill="#000"/><rect x="0" y="278" width="3" height="1" fill="#000"/><rect x="0" y="306" width="3" height="1" fill="#000"/><rect x="0" y="333" width="3" height="1" fill="#000"/><rect x="0" y="361" width="3" height="1" fill="#000"/><rect x="0" y="389" width="3" height="1" fill="#000"/><rect x="0" y="416" width="3" height="1" fill="#000"/><rect x="0" y="444" width="3" height="1" fill="#000"/><rect x="0" y="472" width="3" height="1" fill="#000"/><rect x="0" y="499" width="3" height="1" fill="#000"/><rect x="2" y="512" width="1" height="2" fill="#000"/><rect x="16" y="512" width="1" height="2" fill="#000"/><rect x="29" y="512" width="1" height="2" fill="#000"/><rect x="41" y="512" width="1" height="2" fill="#000"/><rect x="117" y="512" width="1" height="2" fill="#000"/><rect x="162" y="512" width="1" height="2" fill="#000"/><rect x="194" y="512" width="1" height="2" fill="#000"/><rect x="218" y="512" width="1" height="2" fill="#000"/><rect x="238" y="512" width="1" height="2" fill="#000"/><rect x="255" y="512" width="1" height="2" fill="#000"/><rect x="270" y="512" width="1" height="2" fill="#000"/><rect x="283" y="512" width="1" height="2" fill="#000"/><rect x="295" y="512" width="1" height="2" fill="#000"/><rect x="371" y="512" width="1" height="2" fill="#000"/><rect x="416" y="512" width="1" height="2" fill="#000"/><rect x="447" y="512" width="1" height="2" fill="#000"/><rect x="472" y="512" width="1" height="2" fill="#000"/><rect x="492" y="512" width="1" height="2" fill="#000"/><rect x="509" y="512" width="1" height="2" fill="#000"/><rect x="524" y="512" width="1" height="2" fill="#000"/><rect x="537" y="512" width="1" height="2" fill="#000"/><rect x="548" y="512" width="1" height="2" fill="#000"/><rect x="625" y="512" width="1" height="2" fill="#000"/><rect x="669" y="512" width="1" height="2" fill="#000"/><rect x="701" y="512" width="1" height="2" fill="#000"/><rect x="726" y="512" width="1" height="2" fill="#000"/><rect x="746" y="512" width="1" height="2" fill="#000"/><rect x="763" y="512" width="1" height="2" fill="#000"/><rect x="777" y="512" width="1" height="2" fill="#000"/><rect x="790" y="512" width="1" height="2" fill="#000"/><rect x="802" y="512" width="1" height="2" fill="#000"/><defs><pattern id="trk" width="2" height="2" patternUnits="userSpaceOnUse"><rect width="2" height="2" fill="#fff"/><rect width="1" height="1" fill="#ECE9D8"/><rect x="1" y="1" width="1" height="1" fill="#ECE9D8"/></pattern></defs><rect x="3" y="500" width="849" height="12" fill="url(#trk)"/></svg>
<div class="ab" style="left:65px;top:666px;width:18px;height:12px;background:#ECE9D8;border:1px solid;border-color:#ECE9D8 #716F64 #716F64 #ECE9D8;box-shadow:inset 1px 1px 0 #fff,inset -1px -1px 0 #ACA899"></div>
<div class="ab" style="left:83px;top:666px;width:17px;height:12px;background:#ECE9D8;border:1px solid;border-color:#ECE9D8 #716F64 #716F64 #ECE9D8;box-shadow:inset 1px 1px 0 #fff,inset -1px -1px 0 #ACA899"></div>
<div class="ab" style="left:899px;top:666px;width:17px;height:12px;background:#ECE9D8;border:1px solid;border-color:#ECE9D8 #716F64 #716F64 #ECE9D8;box-shadow:inset 1px 1px 0 #fff,inset -1px -1px 0 #ACA899"></div>
<svg class="ab" style="left:72px;top:668px;" width="4" height="7" viewBox="0 0 4 7"><path d="M3 0V7H2V6H1V5H0V2H1V1H2V0Z" fill="#000"/></svg>
<svg class="ab" style="left:905px;top:668px;" width="4" height="7" viewBox="0 0 4 7"><path d="M0 0V7H1V6H2V5H3V2H2V1H1V0Z" fill="#000"/></svg>
<div class="t" style="left:35.91px;top:162.72px;font-size:12.5px;color:#000;font-family:'Liberation Sans',sans-serif;transform:scaleX(0.9651);transform-origin:0 0;">10.0</div>
<div class="t" style="left:42.63px;top:189.72px;font-size:12.5px;color:#000;font-family:'Liberation Sans',sans-serif;transform:scaleX(0.9651);transform-origin:0 0;">0.0</div>
<div class="t" style="left:31.90px;top:217.72px;font-size:12.5px;color:#000;font-family:'Liberation Sans',sans-serif;transform:scaleX(0.9651);transform-origin:0 0;">-10.0</div>
<div class="t" style="left:31.90px;top:244.72px;font-size:12.5px;color:#000;font-family:'Liberation Sans',sans-serif;transform:scaleX(0.9651);transform-origin:0 0;">-20.0</div>
<div class="t" style="left:31.90px;top:272.72px;font-size:12.5px;color:#000;font-family:'Liberation Sans',sans-serif;transform:scaleX(0.9651);transform-origin:0 0;">-30.0</div>
<div class="t" style="left:31.90px;top:300.72px;font-size:12.5px;color:#000;font-family:'Liberation Sans',sans-serif;transform:scaleX(0.9651);transform-origin:0 0;">-40.0</div>
<div class="t" style="left:31.90px;top:327.72px;font-size:12.5px;color:#000;font-family:'Liberation Sans',sans-serif;transform:scaleX(0.9651);transform-origin:0 0;">-50.0</div>
<div class="t" style="left:31.90px;top:355.72px;font-size:12.5px;color:#000;font-family:'Liberation Sans',sans-serif;transform:scaleX(0.9651);transform-origin:0 0;">-60.0</div>
<div class="t" style="left:31.90px;top:383.72px;font-size:12.5px;color:#000;font-family:'Liberation Sans',sans-serif;transform:scaleX(0.9651);transform-origin:0 0;">-70.0</div>
<div class="t" style="left:31.90px;top:410.72px;font-size:12.5px;color:#000;font-family:'Liberation Sans',sans-serif;transform:scaleX(0.9651);transform-origin:0 0;">-80.0</div>
<div class="t" style="left:31.90px;top:438.72px;font-size:12.5px;color:#000;font-family:'Liberation Sans',sans-serif;transform:scaleX(0.9651);transform-origin:0 0;">-90.0</div>
<div class="t" style="left:25.20px;top:466.72px;font-size:12.5px;color:#000;font-family:'Liberation Sans',sans-serif;transform:scaleX(0.9651);transform-origin:0 0;">-100.0</div>
<div class="t" style="left:26.07px;top:493.72px;font-size:12.5px;color:#000;font-family:'Liberation Sans',sans-serif;transform:scaleX(0.9651);transform-origin:0 0;">-110.0</div>
<div class="t" style="left:25.20px;top:521.72px;font-size:12.5px;color:#000;font-family:'Liberation Sans',sans-serif;transform:scaleX(0.9651);transform-origin:0 0;">-120.0</div>
<div class="t" style="left:25.20px;top:549.72px;font-size:12.5px;color:#000;font-family:'Liberation Sans',sans-serif;transform:scaleX(0.9651);transform-origin:0 0;">-130.0</div>
<div class="t" style="left:25.20px;top:576.72px;font-size:12.5px;color:#000;font-family:'Liberation Sans',sans-serif;transform:scaleX(0.9651);transform-origin:0 0;">-140.0</div>
<div class="t" style="left:25.20px;top:604.72px;font-size:12.5px;color:#000;font-family:'Liberation Sans',sans-serif;transform:scaleX(0.9651);transform-origin:0 0;">-150.0</div>
<div class="t" style="left:25.20px;top:632.72px;font-size:12.5px;color:#000;font-family:'Liberation Sans',sans-serif;transform:scaleX(0.9651);transform-origin:0 0;">-160.0</div>
<div class="t" style="left:25.20px;top:659.72px;font-size:12.5px;color:#000;font-family:'Liberation Sans',sans-serif;transform:scaleX(0.9651);transform-origin:0 0;">-170.0</div>
<div class="t" style="left:62.35px;top:682.72px;font-size:12.5px;color:#000;font-family:'Liberation Sans',sans-serif;transform:scaleX(0.9355);transform-origin:0 0;">7</div>
<div class="t" style="left:98.30px;top:682.72px;font-size:12.5px;color:#000;font-family:'Liberation Sans',sans-serif;transform:scaleX(0.9355);transform-origin:0 0;">10</div>
<div class="t" style="left:174.65px;top:682.72px;font-size:12.5px;color:#000;font-family:'Liberation Sans',sans-serif;transform:scaleX(0.9355);transform-origin:0 0;">20</div>
<div class="t" style="left:219.32px;top:682.72px;font-size:12.5px;color:#000;font-family:'Liberation Sans',sans-serif;transform:scaleX(0.9355);transform-origin:0 0;">30</div>
<div class="t" style="left:275.59px;top:682.72px;font-size:12.5px;color:#000;font-family:'Liberation Sans',sans-serif;transform:scaleX(0.9355);transform-origin:0 0;">50</div>
<div class="t" style="left:312.65px;top:682.72px;font-size:12.5px;color:#000;font-family:'Liberation Sans',sans-serif;transform:scaleX(0.9355);transform-origin:0 0;">70</div>
<div class="t" style="left:348.70px;top:682.72px;font-size:12.5px;color:#000;font-family:'Liberation Sans',sans-serif;transform:scaleX(0.9355);transform-origin:0 0;">100</div>
<div class="t" style="left:425.06px;top:682.72px;font-size:12.5px;color:#000;font-family:'Liberation Sans',sans-serif;transform:scaleX(0.9355);transform-origin:0 0;">200</div>
<div class="t" style="left:469.72px;top:682.72px;font-size:12.5px;color:#000;font-family:'Liberation Sans',sans-serif;transform:scaleX(0.9355);transform-origin:0 0;">300</div>
<div class="t" style="left:525.99px;top:682.72px;font-size:12.5px;color:#000;font-family:'Liberation Sans',sans-serif;transform:scaleX(0.9355);transform-origin:0 0;">500</div>
<div class="t" style="left:563.06px;top:682.72px;font-size:12.5px;color:#000;font-family:'Liberation Sans',sans-serif;transform:scaleX(0.9355);transform-origin:0 0;">700</div>
<div class="t" style="left:601.03px;top:682.72px;font-size:12.5px;color:#000;font-family:'Liberation Sans',sans-serif;transform:scaleX(0.9355);transform-origin:0 0;">1.0k</div>
<div class="t" style="left:677.39px;top:682.72px;font-size:12.5px;color:#000;font-family:'Liberation Sans',sans-serif;transform:scaleX(0.9355);transform-origin:0 0;">2.0k</div>
<div class="t" style="left:722.06px;top:682.72px;font-size:12.5px;color:#000;font-family:'Liberation Sans',sans-serif;transform:scaleX(0.9355);transform-origin:0 0;">3.0k</div>
<div class="t" style="left:778.33px;top:682.72px;font-size:12.5px;color:#000;font-family:'Liberation Sans',sans-serif;transform:scaleX(0.9355);transform-origin:0 0;">5.0k</div>
<div class="t" style="left:815.39px;top:682.72px;font-size:12.5px;color:#000;font-family:'Liberation Sans',sans-serif;transform:scaleX(0.9355);transform-origin:0 0;">7.0k</div>
<div class="t" style="left:851.42px;top:682.72px;font-size:12.5px;color:#000;font-family:'Liberation Sans',sans-serif;transform:scaleX(0.9355);transform-origin:0 0;">10.0k</div>
<div class="t" style="left:471.20px;top:693.72px;font-size:12.5px;color:#000;font-family:'Liberation Sans',sans-serif;transform:scaleX(0.9475);transform-origin:0 0;">Frequency (Hz)</div>
<div class="t" style="left:21.4px;top:448.2px;transform-origin:0 0;transform:rotate(-90deg)"><div style="position:relative">
<div class="t" style="left:0.00px;top:-10.28px;font-size:12.5px;color:#000;font-family:'Liberation Sans',sans-serif;transform:scaleX(1.0514);transform-origin:0 0;">dBV rms</div>
</div></div>
<div class="t" style="left:887.20px;top:171.71px;font-size:21px;color:#858585;font-family:'Liberation Serif',serif;font-weight:bold;font-style:italic;transform:scaleX(0.9438);transform-origin:0 0;">S</div>
<svg class="ab" style="left:899px;top:177px;" width="13" height="13" viewBox="0 0 13 13"><path class="aa" d="M2 6.5H11M7.5 2L5.5 11.5" stroke="#909090" stroke-width="1.1" fill="none"/></svg>
<svg class="ab" style="left:0;top:0" width="1024" height="768"><path d="M66.0 553.8 L79.5 551.5 L87.3 550.1 L95.2 550.1 L97.1 551.1 L104.9 551.5 L114.7 554.4 L122.5 555.4 L129.3 549.5 L134.2 548.2 L142.0 553.4 L146.9 554.4 L153.8 550.5 L163.5 556.0 L172.3 551.1 L176.2 558.3 L180.1 555.0 L184.0 556.0 L188.9 553.4 L192.8 555.0 L198.7 554.4 L202.6 560.3 L206.5 562.2 L214.3 558.9 L222.1 558.7 L226.0 561.2 L231.9 555.4 L236.8 561.2 L240.7 558.3 L244.6 564.2 L247.5 562.8 L250.4 569.0 L253.4 564.8 L255.3 564.8 L258.2 564.5 L260.3 571.2 L264.1 563.4 L267.0 565.4 L271.7 562.4 L274.0 564.8 L277.0 565.9 L279.3 569.2 L280.5 536.0 L281.6 522.6 L282.5 516.1 L283.4 519.6 L284.3 522.6 L285.2 543.7 L285.7 566.0 L287.5 572.4 L290.4 571.2 L291.6 569.5 L294.5 572.4 L296.9 567.7 L299.2 568.9 L300.4 572.0 L305.1 570.6 L308.0 578.2 L311.5 568.3 L313.9 576.7 L315.6 569.5 L318.6 572.4 L320.9 579.4 L325.0 575.3 L327.3 568.3 L329.7 573.0 L332.0 573.0 L336.1 582.1 L340.2 572.4 L342.6 577.1 L346.7 569.2 L348.4 576.5 L354.3 585.3 L356.6 577.7 L360.2 570.0 L362.5 576.5 L364.8 581.2 L366.0 575.3 L370.0 580.0 L371.0 579.0 L373.0 573.3 L375.0 579.0 L377.0 580.0 L379.0 578.7 L381.0 573.5 L383.0 582.2 L385.0 581.4 L387.0 580.8 L389.0 576.9 L391.0 579.6 L393.0 576.0 L395.0 578.9 L397.0 578.1 L399.0 582.0 L401.0 575.3 L403.0 579.8 L404.0 578.2 L404.5 570.0 L406.5 581.0 L408.5 578.1 L410.5 579.4 L412.5 578.0 L414.5 578.4 L416.5 578.3 L418.5 580.1 L420.5 575.4 L422.5 580.0 L424.5 577.2 L426.5 579.9 L428.5 577.4 L430.5 582.4 L432.5 577.7 L434.5 578.7 L436.0 578.8 L436.5 573.0 L438.5 586.7 L440.5 583.2 L442.5 584.8 L444.5 583.4 L446.5 585.5 L448.5 582.6 L450.5 585.0 L452.5 584.0 L454.5 584.3 L456.5 582.2 L458.5 586.0 L460.5 584.0 L462.5 581.2 L464.5 582.2 L466.5 585.3 L468.5 580.9 L470.5 587.1 L472.5 583.1 L474.5 587.9 L476.5 584.0 L478.5 584.8 L480.5 583.7 L482.5 587.5 L484.5 582.7 L486.5 584.4 L488.5 581.5 L490.5 584.2 L492.5 580.0 L494.5 587.8 L496.5 581.2 L497.5 584.2 L498.0 574.0 L500.0 583.9 L502.0 584.5 L504.0 582.5 L506.0 582.5 L508.0 582.8 L510.0 585.0 L512.0 583.0 L514.0 586.5 L516.0 578.7 L518.0 588.0 L520.0 583.5 L522.0 588.3 L524.0 581.3 L525.0 584.3 L525.5 578.4 L527.5 582.2 L529.5 585.0 L531.8 584.3 L532.3 578.4 L534.3 585.7 L536.3 582.0 L538.3 585.9 L540.3 581.2 L542.3 585.8 L544.3 583.2 L546.3 585.4 L547.5 584.5 L548.0 566.3 L550.0 589.1 L552.0 583.7 L554.0 586.3 L556.0 581.1 L558.0 586.5 L560.0 580.5 L562.0 588.5 L564.0 583.9 L566.0 584.8 L566.5 565.2 L568.5 580.9 L570.5 587.8 L572.5 584.3 L574.5 585.8 L576.5 584.8 L578.5 588.9 L580.5 584.1 L581.5 585.1 L582.0 576.0 L584.0 584.6 L586.0 586.4 L588.0 584.1 L590.0 588.7 L592.0 585.1 L594.0 586.9 L595.3 585.4 L595.8 580.0 L597.8 586.6 L599.8 582.0 L601.8 588.9 L603.8 582.0 L605.8 587.9 L607.8 584.7 L609.8 586.9 L611.8 587.5 L613.8 587.0 L615.8 584.4 L617.8 588.2 L619.8 585.8 L621.8 587.0 L623.8 586.0 L625.8 586.4 L627.8 582.4 L629.8 587.2 L631.8 583.3 L633.8 587.4 L635.8 585.5 L637.8 587.4 L639.8 585.9 L641.8 590.1 L643.8 584.5 L645.8 590.4 L647.8 586.3 L649.8 586.8 L651.8 588.1 L653.8 588.3 L655.8 584.1 L657.8 587.1 L659.8 586.8 L661.8 588.5 L663.8 582.0 L665.8 591.0 L667.8 586.4 L669.8 587.7 L671.8 586.4 L673.8 587.9 L675.8 586.7 L677.8 589.6 L679.8 586.3 L681.8 592.6 L683.8 584.6 L685.8 586.8 L687.8 585.8 L689.8 589.5 L691.8 585.4 L693.8 588.4 L695.8 585.9 L697.8 585.9 L699.8 587.7 L701.8 592.3 L704.0 585.4 L706.2 589.2 L708.4 585.6 L710.6 588.5 L712.8 585.6 L715.0 590.6 L717.2 583.5 L719.4 589.2 L721.6 586.6 L723.8 588.9 L726.0 588.1 L728.2 589.2 L730.4 582.4 L732.6 589.5 L734.8 587.7 L737.0 590.6 L739.2 588.6 L741.4 591.5 L743.6 588.3 L745.8 590.3 L748.0 585.8 L750.2 589.7 L752.4 588.1 L754.6 593.8 L756.8 588.5 L759.0 592.9 L761.2 588.4 L763.4 592.5 L765.6 587.4 L767.8 591.6 L770.0 588.1 L772.2 592.6 L774.4 589.8 L776.6 592.6 L778.8 590.5 L781.0 590.6 L783.2 591.9 L785.4 591.6 L787.6 590.6 L789.8 588.6 L792.0 588.0 L794.2 590.8 L796.4 588.6 L798.6 592.4 L800.8 590.3 L803.0 594.3 L805.2 589.6 L807.4 591.6 L809.6 589.3 L811.8 593.2 L814.0 590.6 L816.2 593.3 L818.4 590.6 L820.6 592.2 L822.8 590.4 L825.0 594.5 L827.2 589.3 L829.4 592.5 L831.6 588.8 L833.8 592.5 L836.0 590.9 L838.2 594.8 L840.4 592.5 L842.6 593.0 L844.8 589.0 L847.0 596.3 L849.2 590.8 L851.4 591.0 L853.6 591.7 L855.8 593.0 L858.0 591.4 L860.2 593.5 L862.4 589.6 L864.6 592.9 L866.8 592.4 L869.0 592.8 L871.2 592.0 L873.4 599.1 L875.6 594.9 L877.8 595.2 L880.0 592.4 L882.2 594.4 L884.4 592.2 L886.6 593.8 L888.8 591.1 L891.0 595.2 L893.2 591.8 L895.4 593.6 L897.6 592.3 L899.8 594.8 L902.0 591.7 L904.2 595.4 L906.4 592.2 L908.6 595.9 L910.8 593.3 L913.0 594.7" fill="none" stroke="#0000F0" stroke-width="1" style="shape-rendering:crispEdges"/></svg>
<div class="t" style="left:535.90px;top:309.94px;font-size:20.5px;color:#000;font-family:'Liberation Sans',sans-serif;transform:scaleX(0.9843);transform-origin:0 0;">BK-YES</div>
<div class="t" style="left:636.30px;top:310.37px;font-size:20px;color:#000;font-family:'Liberation Sans',sans-serif;transform:scaleX(1.0099);transform-origin:0 0;">Кус=21</div>
<div class="t" style="left:535.90px;top:334.37px;font-size:20px;color:#000;font-family:'Liberation Sans',sans-serif;transform:scaleX(1.0128);transform-origin:0 0;">шумы -</div>
<div class="t" style="left:535.90px;top:358.37px;font-size:20px;color:#000;font-family:'Liberation Sans',sans-serif;transform:scaleX(1.0496);transform-origin:0 0;">вход закорочен</div>
<div class="t" style="left:596.00px;top:405.94px;font-size:20.5px;color:#000;font-family:'Liberation Sans',sans-serif;transform:scaleX(1.0526);transform-origin:0 0;">2.11.24</div>
<div class="ab" style="left:255px;top:216px;width:227px;height:72px;background:#7C8CDE;border:1px solid #7C8CDE;border-radius:3px 3px 0 0"></div>
<div class="ab" style="left:256px;top:217px;width:225px;height:21px;background:linear-gradient(to bottom,#9BB0EE 0px,#7F96E1 3px,#7A92DF 8px,#80A0E6 15px,#85A8EA 19px,#7C98E2 21px);border-radius:2px 2px 0 0"></div>
<div class="t" style="left:259.00px;top:223.99px;font-size:11px;color:#D8E2F8;font-family:'Liberation Sans',sans-serif;font-weight:bold;transform:scaleX(1.0517);transform-origin:0 0;">THD+N</div>
<div class="ab" style="left:463px;top:222px;width:13px;height:13px;border:1px solid #E8ECF8;border-radius:2px;background:linear-gradient(135deg,#C88A98,#B06878)"></div>
<svg class="ab" style="left:463px;top:222px;" width="13" height="13" viewBox="0 0 13 13"><path class="aa" d="M3.5 3.5L9.5 9.5M9.5 3.5L3.5 9.5" stroke="#fff" stroke-width="2"/></svg>
<div class="ab" style="left:259px;top:238px;width:219px;height:46px;background:#fff;border:1px solid #000;overflow:hidden">
<div style="position:absolute;left:-260px;top:-239px">
<div class="t" style="left:265.20px;top:246.82px;font-size:36px;color:#000;font-family:'Liberation Sans',sans-serif;transform:scaleX(0.9905);transform-origin:0 0;">123.874290 %</div>
</div></div>
<div class="ab" style="left:257px;top:308px;width:180px;height:72px;background:#0A3FD0;border:1px solid #0A3FD0;border-radius:3px 3px 0 0"></div>
<div class="ab" style="left:258px;top:309px;width:178px;height:21px;background:linear-gradient(to bottom,#3D86F5 0px,#1C5FE6 3px,#0B4ED9 10px,#0A48D2 18px,#0A3FC8 21px);border-radius:2px 2px 0 0"></div>
<div class="t" style="left:261.00px;top:315.99px;font-size:11px;color:#fff;font-family:'Liberation Sans',sans-serif;font-weight:bold;transform:scaleX(0.9252);transform-origin:0 0;">SNR</div>
<div class="ab" style="left:418px;top:314px;width:13px;height:13px;border:1px solid #E8ECF8;border-radius:2px;background:linear-gradient(135deg,#F0A080,#D8512E)"></div>
<svg class="ab" style="left:418px;top:314px;" width="13" height="13" viewBox="0 0 13 13"><path class="aa" d="M3.5 3.5L9.5 9.5M9.5 3.5L3.5 9.5" stroke="#fff" stroke-width="2"/></svg>
<div class="ab" style="left:261px;top:330px;width:172px;height:46px;background:#fff;border:1px solid #000;overflow:hidden">
<div style="position:absolute;left:-262px;top:-331px">
<div class="t" style="left:274.30px;top:338.82px;font-size:36px;color:#000;font-family:'Liberation Sans',sans-serif;transform:scaleX(0.9803);transform-origin:0 0;">-1.86 dB</div>
</div></div>
<div class="t" style="left:944.40px;top:154.72px;font-size:12.5px;color:#000;font-family:'Liberation Sans',sans-serif;transform:scaleX(0.9328);transform-origin:0 0;">Overlays</div>
<div class="ab" style="left:944px;top:166px;width:47px;height:1px;background:#000"></div>
<div class="t" style="left:935.5px;top:185px;transform-origin:0 0;transform:rotate(-90deg)"><div style="position:relative">
<div class="t" style="left:0.00px;top:-10.28px;font-size:12.5px;color:#000;font-family:'Liberation Sans',sans-serif;transform:scaleX(0.9333);transform-origin:0 0;">Set</div>
</div></div>
<div class="t" style="left:950px;top:185px;transform-origin:0 0;transform:rotate(-90deg)"><div style="position:relative">
<div class="t" style="left:0.00px;top:-10.28px;font-size:12.5px;color:#000;font-family:'Liberation Sans',sans-serif;transform:scaleX(0.8809);transform-origin:0 0;">On</div>
</div></div>
<div class="ab" style="left:923px;top:189px;width:14px;height:14px;background:#ECE9D8;border:1px solid;border-color:#fff #716F64 #716F64 #fff;box-shadow:inset -1px -1px 0 #ACA899"></div>
<div class="t" style="left:926.55px;top:189.72px;font-size:12.5px;color:#000;font-family:'Liberation Sans',sans-serif;transform:scaleX(0.8500);transform-origin:0 0;">1</div>
<div class="ab" style="left:940px;top:190px;width:13px;height:13px;background:#fff;border:1px solid;border-color:#ACA899 #fff #fff #ACA899;box-shadow:inset 1px 1px 0 #716F64,inset -1px -1px 0 #F1EFE2"></div>
<div class="t" style="left:956.60px;top:190.72px;font-size:12.5px;color:#000050;font-family:'Liberation Sans',sans-serif;transform:scaleX(0.9084);transform-origin:0 0;">Overlay 1</div>
<div class="ab" style="left:923px;top:205px;width:14px;height:14px;background:#ECE9D8;border:1px solid;border-color:#fff #716F64 #716F64 #fff;box-shadow:inset -1px -1px 0 #ACA899"></div>
<div class="t" style="left:926.55px;top:205.72px;font-size:12.5px;color:#000;font-family:'Liberation Sans',sans-serif;transform:scaleX(0.8500);transform-origin:0 0;">2</div>
<div class="ab" style="left:940px;top:206px;width:13px;height:13px;background:#fff;border:1px solid;border-color:#ACA899 #fff #fff #ACA899;box-shadow:inset 1px 1px 0 #716F64,inset -1px -1px 0 #F1EFE2"></div>
<div class="t" style="left:956.60px;top:206.72px;font-size:12.5px;color:#0000FF;font-family:'Liberation Sans',sans-serif;transform:scaleX(0.9084);transform-origin:0 0;">Overlay 2</div>
<div class="ab" style="left:923px;top:221px;width:14px;height:14px;background:#ECE9D8;border:1px solid;border-color:#fff #716F64 #716F64 #fff;box-shadow:inset -1px -1px 0 #ACA899"></div>
<div class="t" style="left:926.55px;top:221.72px;font-size:12.5px;color:#000;font-family:'Liberation Sans',sans-serif;transform:scaleX(0.8500);transform-origin:0 0;">3</div>
<div class="ab" style="left:940px;top:222px;width:13px;height:13px;background:#fff;border:1px solid;border-color:#ACA899 #fff #fff #ACA899;box-shadow:inset 1px 1px 0 #716F64,inset -1px -1px 0 #F1EFE2"></div>
<div class="t" style="left:956.60px;top:222.72px;font-size:12.5px;color:#500000;font-family:'Liberation Sans',sans-serif;transform:scaleX(0.9084);transform-origin:0 0;">Overlay 3</div>
<div class="ab" style="left:923px;top:237px;width:14px;height:14px;background:#ECE9D8;border:1px solid;border-color:#fff #716F64 #716F64 #fff;box-shadow:inset -1px -1px 0 #ACA899"></div>
<div class="t" style="left:926.55px;top:237.72px;font-size:12.5px;color:#000;font-family:'Liberation Sans',sans-serif;transform:scaleX(0.8500);transform-origin:0 0;">4</div>
<div class="ab" style="left:940px;top:238px;width:13px;height:13px;background:#fff;border:1px solid;border-color:#ACA899 #fff #fff #ACA899;box-shadow:inset 1px 1px 0 #716F64,inset -1px -1px 0 #F1EFE2"></div>
<div class="t" style="left:956.60px;top:238.72px;font-size:12.5px;color:#0000FF;font-family:'Liberation Sans',sans-serif;transform:scaleX(0.9084);transform-origin:0 0;">Overlay 4</div>
<div class="ab" style="left:923px;top:253px;width:14px;height:14px;background:#ECE9D8;border:1px solid;border-color:#fff #716F64 #716F64 #fff;box-shadow:inset -1px -1px 0 #ACA899"></div>
<div class="t" style="left:926.55px;top:253.72px;font-size:12.5px;color:#000;font-family:'Liberation Sans',sans-serif;transform:scaleX(0.8500);transform-origin:0 0;">5</div>
<div class="ab" style="left:940px;top:254px;width:13px;height:13px;background:#fff;border:1px solid;border-color:#ACA899 #fff #fff #ACA899;box-shadow:inset 1px 1px 0 #716F64,inset -1px -1px 0 #F1EFE2"></div>
<div class="t" style="left:956.60px;top:254.72px;font-size:12.5px;color:#008000;font-family:'Liberation Sans',sans-serif;transform:scaleX(0.9084);transform-origin:0 0;">Overlay 5</div>
<div class="ab" style="left:923px;top:269px;width:14px;height:14px;background:#ECE9D8;border:1px solid;border-color:#fff #716F64 #716F64 #fff;box-shadow:inset -1px -1px 0 #ACA899"></div>
<div class="t" style="left:926.55px;top:269.72px;font-size:12.5px;color:#000;font-family:'Liberation Sans',sans-serif;transform:scaleX(0.8500);transform-origin:0 0;">6</div>
<div class="ab" style="left:940px;top:270px;width:13px;height:13px;background:#fff;border:1px solid;border-color:#ACA899 #fff #fff #ACA899;box-shadow:inset 1px 1px 0 #716F64,inset -1px -1px 0 #F1EFE2"></div>
<div class="t" style="left:956.60px;top:270.72px;font-size:12.5px;color:#000050;font-family:'Liberation Sans',sans-serif;transform:scaleX(0.9084);transform-origin:0 0;">Overlay 6</div>
<div class="ab" style="left:923px;top:285px;width:14px;height:14px;background:#ECE9D8;border:1px solid;border-color:#fff #716F64 #716F64 #fff;box-shadow:inset -1px -1px 0 #ACA899"></div>
<div class="t" style="left:925.66px;top:285.72px;font-size:12.5px;color:#000;font-family:'Liberation Sans',sans-serif;transform:scaleX(0.8500);transform-origin:0 0;">C</div>
<div class="ab" style="left:940px;top:286px;width:13px;height:13px;background:#fff;border:1px solid;border-color:#ACA899 #fff #fff #ACA899;box-shadow:inset 1px 1px 0 #716F64,inset -1px -1px 0 #F1EFE2"></div>
<div class="t" style="left:956.60px;top:286.72px;font-size:12.5px;color:#000;font-family:'Liberation Sans',sans-serif;transform:scaleX(0.9975);transform-origin:0 0;">Composite</div>
<div class="ab" style="left:920px;top:302px;width:65px;height:18px;background:#ECE9D8;border:1px solid;border-color:#fff #716F64 #716F64 #fff;box-shadow:inset -1px -1px 0 #ACA899"></div>
<div class="t" style="left:926.80px;top:304.72px;font-size:12.5px;color:#000;font-family:'Liberation Sans',sans-serif;transform:scaleX(0.9551);transform-origin:0 0;">Options...</div>
<div class="ab" style="left:932px;top:696px;width:10px;height:10px;border:1px solid #000;background:#ECE9D8;box-shadow:inset 1px 1px 0 #fff,inset -1px -1px 0 #fff"></div>
<div class="ab" style="left:934px;top:701px;width:5px;height:1px;background:#000"></div>
<div class="ab" style="left:936px;top:699px;width:1px;height:5px;background:#000"></div>
<div class="ab" style="left:1008px;top:696px;width:10px;height:10px;border:1px solid #000;background:#ECE9D8;box-shadow:inset 1px 1px 0 #fff,inset -1px -1px 0 #fff"></div>
<div class="ab" style="left:1011px;top:701px;width:4px;height:1px;background:#000"></div>
<div class="ab" style="left:3px;top:709px;width:1019px;height:2px;background:#fff"></div>
<div class="ab" style="left:1021px;top:117px;width:1px;height:594px;background:#fff"></div>
<div class="ab" style="left:5px;top:713px;width:118px;height:18px;border:1px solid;border-color:#ACA899 #E4E2DA #E4E2DA #ACA899"></div>
<div class="t" style="left:9.00px;top:715.72px;font-size:12.5px;color:#000;font-family:'Liberation Sans',sans-serif;transform:scaleX(0.9772);transform-origin:0 0;">Stopped</div>
<div class="ab" style="left:125px;top:713px;width:101px;height:18px;border:1px solid;border-color:#ACA899 #E4E2DA #E4E2DA #ACA899"></div>
<div class="t" style="left:129.50px;top:715.72px;font-size:12.5px;color:#000;font-family:'Liberation Sans',sans-serif;transform:scaleX(0.9897);transform-origin:0 0;">Real Time</div>
<div class="ab" style="left:228px;top:713px;width:71px;height:18px;border:1px solid;border-color:#ACA899 #E4E2DA #E4E2DA #ACA899"></div>
<div class="t" style="left:232.00px;top:715.72px;font-size:12.5px;color:#000;font-family:'Liberation Sans',sans-serif;transform:scaleX(0.9682);transform-origin:0 0;">96000 Hz</div>
<div class="ab" style="left:301px;top:713px;width:51px;height:18px;border:1px solid;border-color:#ACA899 #E4E2DA #E4E2DA #ACA899"></div>
<div class="t" style="left:305.20px;top:715.72px;font-size:12.5px;color:#000;font-family:'Liberation Sans',sans-serif;transform:scaleX(0.9634);transform-origin:0 0;">24 Bit</div>
<div class="ab" style="left:354px;top:713px;width:51px;height:18px;border:1px solid;border-color:#ACA899 #E4E2DA #E4E2DA #ACA899"></div>
<div class="t" style="left:357.90px;top:715.72px;font-size:12.5px;color:#000;font-family:'Liberation Sans',sans-serif;transform:scaleX(0.9690);transform-origin:0 0;">Stereo</div>
<div class="ab" style="left:407px;top:713px;width:101px;height:18px;border:1px solid;border-color:#ACA899 #E4E2DA #E4E2DA #ACA899"></div>
<div class="t" style="left:411.20px;top:715.72px;font-size:12.5px;color:#000;font-family:'Liberation Sans',sans-serif;transform:scaleX(0.9633);transform-origin:0 0;">FFT 131072 pts</div>
<div class="ab" style="left:510px;top:713px;width:74px;height:18px;border:1px solid;border-color:#ACA899 #E4E2DA #E4E2DA #ACA899"></div>
<div class="t" style="left:514.20px;top:715.72px;font-size:12.5px;color:#000;font-family:'Liberation Sans',sans-serif;transform:scaleX(0.9836);transform-origin:0 0;">Hanning</div>
<div class="ab" style="left:585px;top:713px;width:436px;height:18px;border:1px solid;border-color:#ACA899 #E4E2DA #E4E2DA #ACA899"></div>
<div class="ab" style="left:0px;top:737px;width:1024px;height:1px;background:#FBFBF6"></div>
<div class="ab" style="left:0px;top:738px;width:1024px;height:30px;background:linear-gradient(to bottom,#2A5BCC 0px,#2A5BCC 1px,#4A92EA 1px,#4A90E8 2px,#2E6CDC 4px,#2054D4 7px,#2158D8 20px,#2462DC 26px,#1E50C0 28px,#1A44A8 30px)"></div>
<div class="ab" style="left:0px;top:738px;width:96px;height:30px;border-radius:0 12px 12px 0;background:linear-gradient(to bottom,#3C9A3C 0px,#5CBF5C 2px,#3EA33E 6px,#37A137 20px,#2E8A2E 26px,#2A7A2A 30px);box-shadow:inset -2px 0 3px rgba(0,0,0,0.25)"></div>
<svg class="ab" style="left:9px;top:743px;" width="21" height="20" viewBox="0 0 21 20"><g transform="translate(0.5,0.5)"><path class="aa" d="M3.5 2 Q8 0 12.5 1.5 L11.5 7.5 Q7 6 2.5 7.5 Z" fill="#F25F1F"/><path class="aa" d="M13.2 3.5 Q16.5 4.8 20 3 L19 9.5 Q15.5 11 12.3 9.8 Z" fill="#86D31C"/><path class="aa" d="M2.3 8.8 Q6.5 7.2 11 8.8 L10 15 Q5.5 13.5 1.2 15 Z" fill="#3E6FE8"/><path class="aa" d="M12 10.8 Q15.5 12 18.8 10.5 L17.8 17 Q14.2 18.5 11 17.2 Z" fill="#F8C91A"/></g></svg>
<div class="t" style="left:35.50px;top:743.21px;font-size:19px;color:#fff;font-family:'Liberation Sans',sans-serif;font-weight:bold;font-style:italic;transform:scaleX(0.8695);transform-origin:0 0;text-shadow:1px 1px 1px #204a20;">пуск</div>
<div class="ab" style="left:105px;top:741px;width:160px;height:23px;border-radius:3px;background:#1E4BC2;border:1px solid #173A9C;box-shadow:inset 1px 1px 0 #153A9A"></div>
<div class="ab" style="left:116px;top:746px;width:16px;height:16px;background-color:#fff;border:1px solid #222;background-image:linear-gradient(#A8A8A8 1px,transparent 1px),linear-gradient(90deg,#A8A8A8 1px,transparent 1px);background-size:3px 3px;background-position:1px 1px"></div>
<svg class="ab" style="left:117px;top:747px;" width="14" height="14" viewBox="0 0 14 14"><path class="aa" d="M0 4 L3 3 L5 1 L7 5 L9 3 L11 6 L13 9" fill="none" stroke="#E02020" stroke-width="1.1"/><path class="aa" d="M0 3 L4 3.5 L6 5 L9 2.5 L11 4 L13 10" fill="none" stroke="#2030E0" stroke-width="1.1"/><text x="7.0" y="13" text-anchor="middle" font-family="Liberation Serif" font-style="italic" font-weight="bold" font-size="8.0" fill="#000">SC</text></svg>
<div class="t" style="left:136.00px;top:747.72px;font-size:12.5px;color:#fff;font-family:'Liberation Sans',sans-serif;transform:scaleX(0.8208);transform-origin:0 0;">SpectraPLUS-SC Sou...</div>
<div class="ab" style="left:266px;top:741px;width:158px;height:23px;border-radius:3px;background:linear-gradient(to bottom,#4E8EF2,#3C80F0 40%,#3375EC);border:1px solid #2C63D6"></div>
<svg class="ab" style="left:275px;top:744px;" width="14" height="17" viewBox="0 0 14 17"><path class="aa" d="M2 5H12L10 16H4Z" fill="#D4A050" stroke="#805020"/><path d="M4 2L5 9M7 1L7 9M10 2L9 9" stroke="#C03030" stroke-width="1.6"/><path d="M6 1L6 8" stroke="#30A030" stroke-width="1.5"/></svg>
<div class="t" style="left:294.00px;top:747.72px;font-size:12.5px;color:#fff;font-family:'Liberation Sans',sans-serif;transform:scaleX(0.8658);transform-origin:0 0;">Безымянный - Paint</div>
<div class="ab" style="left:819px;top:745px;width:17px;height:16px;background:#3A6CDB"></div>
<div class="t" style="left:819.30px;top:746.72px;font-size:12.5px;color:#fff;font-family:'Liberation Sans',sans-serif;transform:scaleX(0.8858);transform-origin:0 0;">RU</div>
<svg class="ab" style="left:842px;top:745px;" width="17" height="14" viewBox="0 0 17 14"><rect x="0.5" y="4.5" width="16" height="8" fill="#fff" stroke="#000"/><path d="M2 7H15M2 9H15M3 11H14" stroke="#000" stroke-dasharray="1 1"/><path d="M6 4C6 1,10 3,10 0" stroke="#000" fill="none"/></svg>
<div class="ab" style="left:877px;top:738px;width:147px;height:30px;background:linear-gradient(to bottom,#0C85E8 0px,#16A0F2 2px,#0E95EE 6px,#0B8FEA 24px,#0C7ED8 30px);border-left:1px solid #0A5FC8;box-shadow:inset 1px 0 0 #19B9F3"></div>
<svg class="ab" style="left:880px;top:738px;" width="104" height="30" viewBox="0 0 104 30"><rect x="8.5" y="9.5" width="6" height="6" fill="#A8D8F8" stroke="#D8E8F8"/><rect x="8" y="16" width="7" height="2" fill="#B8B8D0"/><path d="M9 19H15" stroke="#303060" stroke-width="1.5"/><path class="aa" d="M16 8.5C17.5 10,17.5 14,16 15.5M18.5 7.5C20.5 9.5,20.5 14.5,18.5 16.5M21.5 7C24 9.5,24 15,21.5 17" stroke="#6AE020" fill="none" stroke-width="1.4"/><rect x="31.5" y="7.5" width="6" height="5" fill="#303060" stroke="#A0A8D0"/><rect x="26.5" y="10.5" width="6" height="5" fill="#303060" stroke="#A0A8D0"/><rect x="26" y="17" width="7" height="3" fill="#B8B8D8"/><path class="aa" d="M34 15L41 22M41 15L34 22" stroke="#F02020" stroke-width="2"/><ellipse class="aa" cx="49.5" cy="12.5" rx="5" ry="5.5" fill="#707070" stroke="#303030"/><ellipse class="aa" cx="48" cy="11" rx="2" ry="2" fill="#C8C8D8"/><path class="aa" d="M54 20C56 19,58 17,59 15M53 22C56 21,59 19,60 16" stroke="#B0B0F0" fill="none" stroke-width="0.8"/><path class="aa" d="M64 8L69 6L70 8L72 9L68 13L66 12Z" fill="#40C030"/><path class="aa" d="M64 17L73 13L76 17L67 22Z" fill="#A0A0B8" stroke="#404050" stroke-width="0.8"/><circle class="aa" cx="88" cy="14.5" r="7.8" fill="#2A5888"/><path d="M82 16H84M85 14H86M87 12H88" stroke="#6A90B8"/><circle class="aa" cx="92" cy="19" r="3.8" fill="#8A20B0" stroke="#2A5888" stroke-width="0.8"/><rect x="91" y="18" width="2" height="2" fill="#fff"/></svg>
<div class="t" style="left:984.40px;top:746.72px;font-size:12.5px;color:#fff;font-family:'Liberation Sans',sans-serif;transform:scaleX(0.8503);transform-origin:0 0;">13:07</div>
</body></html>
